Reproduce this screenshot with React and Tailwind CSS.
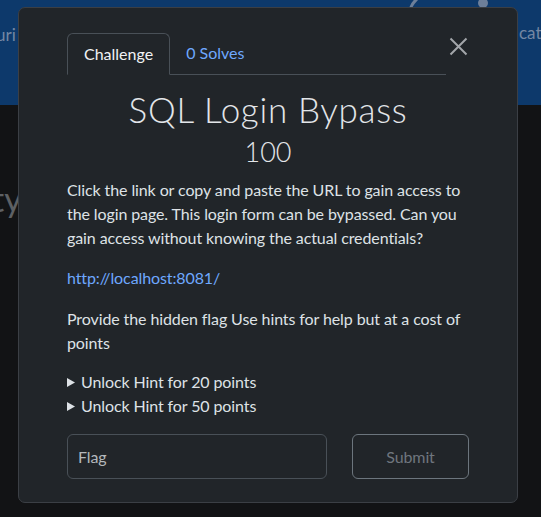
import React from "react";

export default function App() {
  return (
    <div className="relative w-[541px] h-[517px] overflow-hidden bg-[#121315]" style={{ fontFamily: "Lato, 'Noto Sans', sans-serif" }}>
      {/* background page */}
      <div className="h-[105px] bg-[#0d396b] relative">
        <span className="absolute left-[-4px] top-[22px] text-[17px] text-[#7487a3]">uri</span>
        <span className="absolute left-[519px] top-[20px] text-[17px] text-[#7487a3]">cati</span>
        <svg className="absolute left-[408px] top-[-4px]" width="12" height="14" viewBox="0 0 12 14"><path d="M2 0 L10 0 L10 4 Q6 8 4 12 L1 12 Q3 6 7 3 L2 3 Z" fill="#6d7f99" /></svg>
        <svg className="absolute left-[477px] top-[-4px]" width="12" height="14" viewBox="0 0 12 14"><circle cx="6" cy="7" r="5" fill="#6d7f99" /></svg>
      </div>
      <span className="absolute left-[-8px] top-[173px] text-[34px] text-[#5d6064]">ty</span>

      {/* modal */}
      <div className="absolute left-[18px] top-[7px] w-[500px] h-[496px] rounded-[7px] border border-[#3b3f45] bg-[#212529] px-12 pt-[25px] text-[#dee2e6]">
        <div className="flex items-start">
          <div className="flex flex-1 border-b border-[#495057] text-[16px] leading-6">
            <div className="-mb-px rounded-t-[6px] border border-[#495057] border-b-[#212529] bg-[#212529] px-4 py-2 text-[#f1f3f5]">Challenge</div>
            <div className="px-4 py-2 text-[#6ea8fe]">0 Solves</div>
          </div>
          <button className="ml-[2px] mt-[3px] flex h-[20px] w-[21px] items-center justify-center">
            <svg width="19" height="19" viewBox="0 0 19 19"><path d="M1.5 1.5 L17.5 17.5 M17.5 1.5 L1.5 17.5" stroke="#a3a6aa" strokeWidth="2" /></svg>
          </button>
        </div>

        <h2 className="mt-[13px] text-center text-[35px] font-light leading-[42px] tracking-[0.7px] text-[#e3e6e9]">SQL Login Bypass</h2>
        <h3 className="mt-[5px] text-center text-[27px] font-light leading-[34px] text-[#e3e6e9]">100</h3>

        <div className="mt-[9px] text-[16px] leading-6 tracking-[-0.1px]">
          <p>Click the link or copy and paste the URL to gain access to the login page. This login form can be bypassed. Can you gain access without knowing the actual credentials?</p>
          <p className="mt-[16px] text-[#6ea8fe]">http://localhost:8081/</p>
          <p className="mt-[17px]">Provide the hidden flag Use hints for help but at a cost of points</p>
          <div className="mt-[15px]">
            <div className="flex items-center">
              <svg className="mr-[6px]" width="8" height="9" viewBox="0 0 8 9"><path d="M0 0 L8 4.5 L0 9 Z" fill="#dee2e6" /></svg>
              <span>Unlock Hint for 20 points</span>
            </div>
            <div className="flex items-center">
              <svg className="mr-[6px]" width="8" height="9" viewBox="0 0 8 9"><path d="M0 0 L8 4.5 L0 9 Z" fill="#dee2e6" /></svg>
              <span>Unlock Hint for 50 points</span>
            </div>
          </div>
          <div className="mt-[16px] flex items-center gap-[25px]">
            <div className="flex h-[45px] w-[260px] items-center rounded-[6px] border border-[#495057] bg-[#212529] px-[10px] text-[#b4b8bc]">Flag</div>
            <div className="flex h-[45px] flex-1 items-center justify-center rounded-[6px] border border-[#6c757d] text-[#6f767e]">Submit</div>
          </div>
        </div>
      </div>
    </div>
  );
}
